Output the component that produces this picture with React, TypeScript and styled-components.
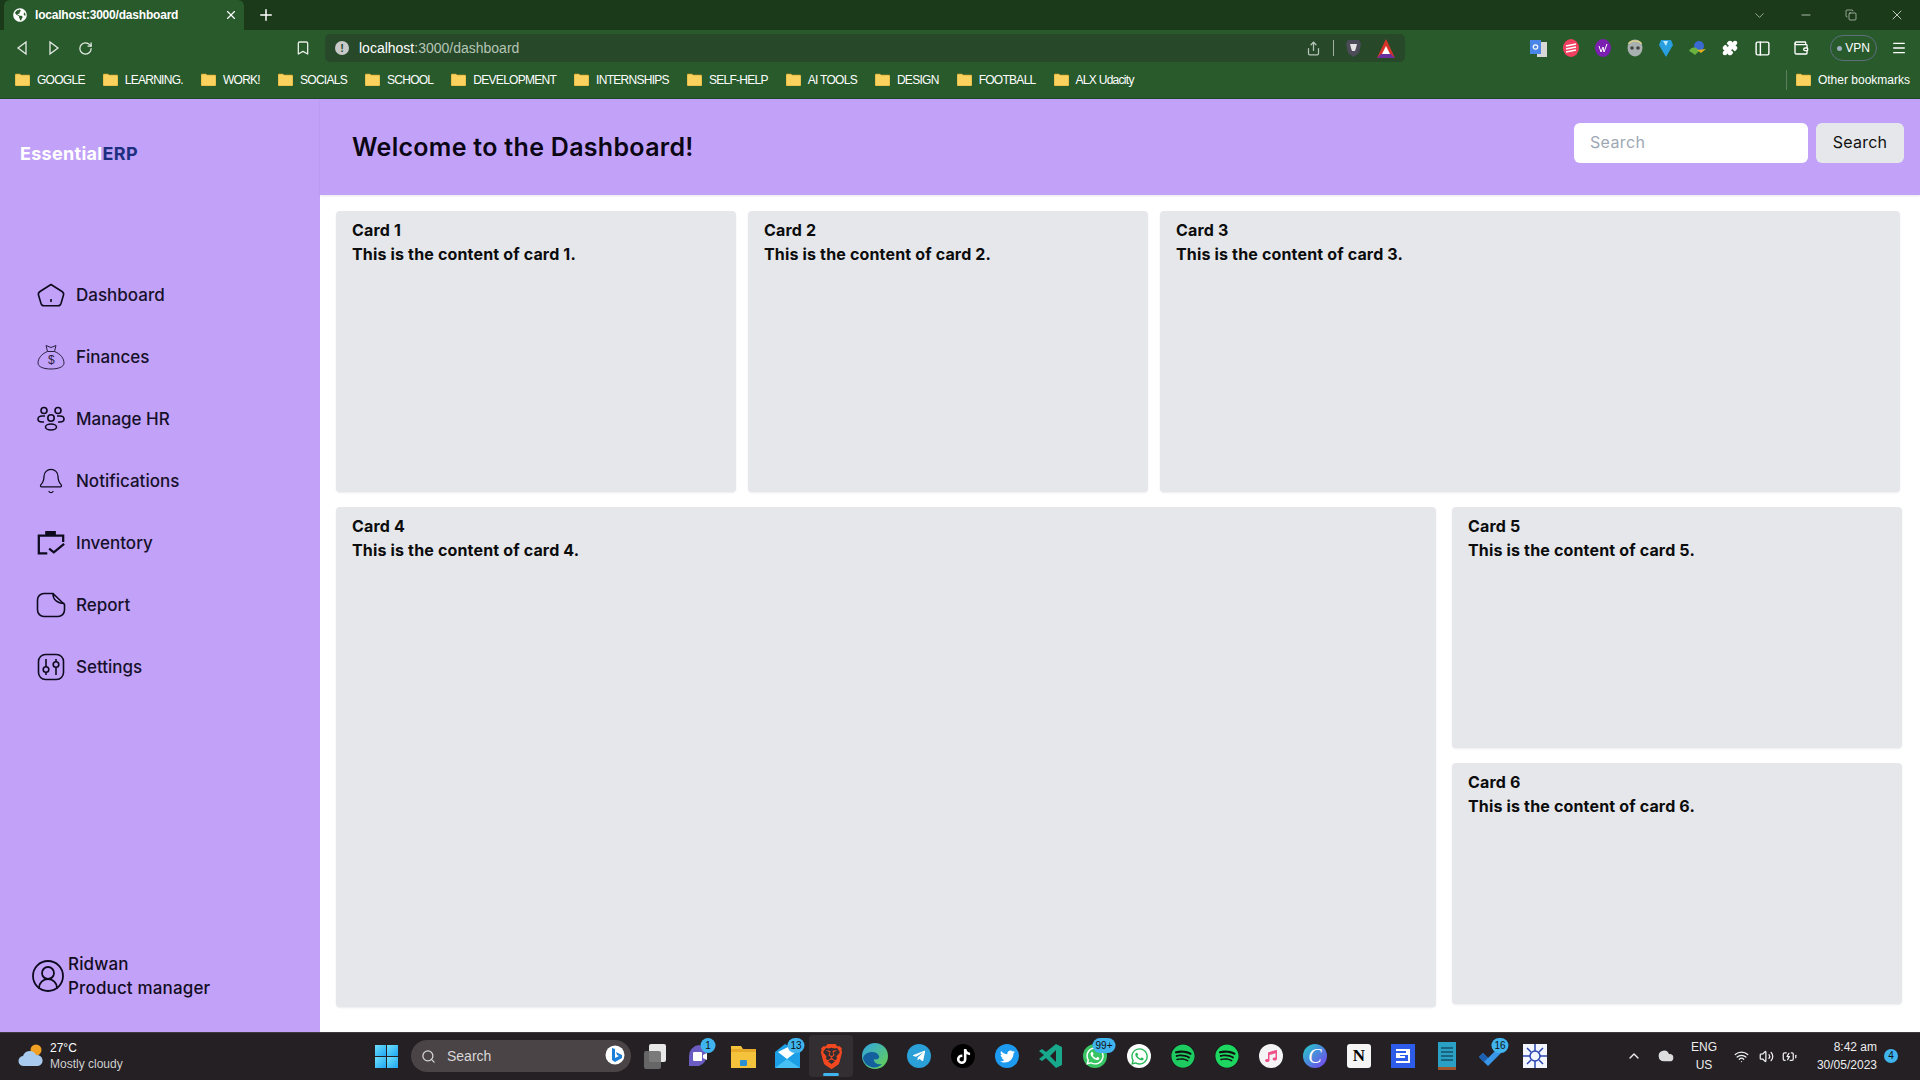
import React from "react";
import styled, { createGlobalStyle } from "styled-components";
import { Bell, UserCircle2, Search as SearchIcon, Bookmark, RotateCw, Plus, X, Minus, Copy, ChevronDown, ChevronUp, Wifi, Volume2, Puzzle, Share, Wallet, PanelLeft, Menu, Cloud, BatteryCharging } from "lucide-react";
import { FaTelegramPlane, FaTiktok, FaTwitter, FaWhatsapp, FaSpotify, FaMusic, FaGlobeAmericas } from "react-icons/fa";
import { SiBrave } from "react-icons/si";

const Global = createGlobalStyle`
  html, body { margin: 0; padding: 0; width: 1920px; height: 1080px; overflow: hidden; }
  body { font-family: "Inter", "Liberation Sans", sans-serif; background: #fff; }
  * { box-sizing: border-box; }
`;
const Page = styled.div`display:flex;flex-direction:column;width:1920px;height:1080px;`;
const TabStrip = styled.div`height:30px;background:#1a3a1a;display:flex;align-items:flex-end;padding-left:4px;flex:none;`;
const Tab = styled.div`width:240px;height:30px;background:#285a2c;border-radius:6px 6px 0 0;display:flex;align-items:center;padding:0 6px 0 9px;gap:8px;color:#fff;font:700 12px "Liberation Sans",sans-serif;`;
const TabTitle = styled.span`flex:1;letter-spacing:-.2px;`;
const NewTab = styled.div`width:40px;height:30px;padding-left:4px;display:flex;align-items:center;justify-content:center;color:#fff;`;
const WindowBtns = styled.div`margin-left:auto;display:flex;align-items:center;height:30px;color:#e8eee8;padding-right:15px;gap:32px;`;
const Toolbar = styled.div`height:36px;background:#285a2c;display:flex;align-items:center;flex:none;color:#fff;padding-left:14px;`;
const NavBtn = styled.div`width:32px;display:flex;align-items:center;color:#e5ece5;`;
const BookmarkBtn = styled.div`margin-left:185px;width:22px;display:flex;color:#e5ece5;`;
const Omnibox = styled.div`margin-left:8px;width:1080px;height:28px;background:#27492a;border-radius:5px;display:flex;align-items:center;padding:0 10px;color:#fff;gap:10px;font:400 14px "Liberation Sans",sans-serif;`;
const InfoDot = styled.span`width:14px;height:14px;border-radius:50%;background:#c9c9c9;color:#27492a;font:700 11px/14px "Liberation Sans",sans-serif;text-align:center;`;
const Dim = styled.span`color:#b5c4b5;`;
const OmniRight = styled.div`margin-left:auto;display:flex;align-items:center;gap:12px;padding-right:0;color:#b5c4b5;`;
const Divider = styled.div`width:1px;height:16px;background:#9fb09f;`;
const Extensions = styled.div`margin-left:125px;display:flex;align-items:center;gap:16px;`;
const ExtGap = styled.span<{ $m: number }>`display:flex;margin-left:${p => p.$m}px;`;
const Vpn = styled.div`width:47px;height:26px;margin-left:5px;margin-right:-2px;border:1px solid #5f6f7f;border-radius:13px;font:400 12px "Liberation Sans",sans-serif;display:flex;align-items:center;justify-content:center;gap:3px;`;
const VpnDot = styled.span`width:5px;height:5px;border-radius:50%;background:#9fb0c0;`;
const Bookmarks = styled.div`height:33px;background:#285a2c;border-bottom:1px solid #1f4a24;display:flex;align-items:center;padding:0 0 5px 15px;flex:none;color:#fff;font:400 12px "Liberation Sans",sans-serif;letter-spacing:-.72px;`;
const BookmarkItem = styled.div`display:flex;align-items:center;gap:7px;margin-right:18px;`;
const Other = styled(BookmarkItem)`margin:0 0 0 auto;padding-right:10px;border-left:1px solid #5b7f5d;padding-left:9px;height:20px;letter-spacing:0;`;
const Folder = () => (<svg width="15" height="13" viewBox="0 0 15 13"><path d="M0 2a1 1 0 0 1 1-1h4l1 1h8a1 1 0 0 1 1 1v9a1 1 0 0 1-1 1H1a1 1 0 0 1-1-1z" fill="#fbd25e" stroke="#c69a2a" strokeWidth=".6"/></svg>);

const Body = styled.div`display:flex;flex:1;min-height:0;`;
const Sidebar = styled.aside`width:320px;flex:none;background:#c2a2f9;display:flex;flex-direction:column;`;
const Logo = styled.div`padding:43px 0 0 20px;font-weight:700;font-size:18px;line-height:24px;color:#fff;letter-spacing:.3px;`;
const LogoAccent = styled.span`color:#1e2f80;`;
const Nav = styled.nav`margin-top:113px;display:flex;flex-direction:column;padding-left:36px;gap:30px;`;
const NavItem = styled.div`display:flex;align-items:center;gap:10px;height:32px;font-size:17px;font-weight:500;color:#16102a;`;
const IconBox = styled.span`width:30px;height:30px;display:flex;align-items:center;justify-content:center;flex:none;`;
const Profile = styled.div`margin-top:auto;margin-bottom:32px;padding-left:30px;display:flex;align-items:center;gap:2px;font-size:17px;line-height:24px;font-weight:500;letter-spacing:.15px;color:#120c22;`;
const Main = styled.main`flex:1;display:flex;flex-direction:column;min-width:0;`;
const Header = styled.header`height:96px;background:#c2a2f9;display:flex;align-items:center;padding:0 16px 0 32px;box-shadow:0 1px 2px rgba(0,0,0,.1);`;
const Title = styled.h1`margin:0 auto 0 0;font-size:25px;font-weight:600;letter-spacing:.3px;color:#0b0614;`;
const SearchInput = styled.div`width:234px;height:40px;background:#fff;border-radius:6px;padding:0 16px 2px;display:flex;align-items:center;font-size:16px;letter-spacing:.35px;color:#a0a7b4;margin-bottom:8px;`;
const SearchBtn = styled.div`width:88px;height:40px;margin:0 0 8px 8px;background:#e5e7eb;border-radius:6px;padding-bottom:2px;display:flex;align-items:center;justify-content:center;font-size:16px;letter-spacing:.2px;color:#111;`;
const Grid = styled.div`display:flex;flex-direction:column;gap:15px;padding:16px 16px 0;`;
const Row = styled.div`display:flex;gap:12px;`;
const Card = styled.div<{ $w: number; $h: number }>`width:${p => p.$w}px;height:${p => p.$h}px;background:#e5e7eb;border-radius:4px;padding:7px 16px;font-weight:700;font-size:16px;line-height:24px;letter-spacing:.16px;color:#0c0c0c;box-shadow:0 1px 2px rgba(0,0,0,.08);`;
const Bottom = styled.div`display:flex;gap:16px;align-items:flex-start;`;
const Stack = styled.div`display:flex;flex-direction:column;gap:15px;`;

const Taskbar = styled.footer`height:48px;flex:none;background:#242024;border-top:1px solid #3b3a3c;padding-bottom:1px;display:flex;align-items:center;color:#fff;font-family:"Liberation Sans",sans-serif;`;
const Weather = styled.div`display:flex;align-items:center;gap:6px;padding:0 0 1px 18px;width:375px;font-size:12px;line-height:16px;`;
const WeatherDim = styled.div`color:#cfcfcf;`;
const Win = styled.div`display:grid;grid-template-columns:11px 11px;gap:1px;width:23px;`;
const WinCell = styled.div`height:11px;background:linear-gradient(135deg,#6fe0fb,#1ea6f2);`;
const TaskSearch = styled.div`margin-left:13px;width:220px;height:32px;background:#4a4446;border-radius:16px;display:flex;align-items:center;padding:0 6px 0 10px;gap:11px;font-size:14px;color:#d8d8d8;`;
const BingWrap = styled.span`margin-left:auto;display:flex;`;
const Apps = styled.div`display:flex;align-items:center;margin-left:2px;`;
const Slot = styled.div<{ $active?: boolean }>`width:44px;height:42px;display:flex;align-items:center;justify-content:center;position:relative;border-radius:4px;background:${p => p.$active ? "#322e32" : "transparent"};`;
const Indicator = styled.span`position:absolute;bottom:1px;left:14px;width:16px;height:3px;border-radius:2px;background:#40b4ee;`;
const Disc = styled.div<{ $c: string; $r?: string }>`width:24px;height:24px;background:${p => p.$c};border-radius:${p => p.$r || "50%"};display:flex;align-items:center;justify-content:center;flex:none;`;
const NotionN = styled.span`color:#000;font:700 17px/24px "Liberation Serif",serif;`;
const CanvaC = styled.span`color:#fff;font:italic 400 20px/24px "Liberation Serif",serif;`;
const Badge = styled.span`position:absolute;top:3px;left:31px;transform:translateX(-50%);min-width:15px;height:15px;padding:0 3px;border-radius:8px;background:#40b4ee;color:#111;font-size:10px;line-height:15px;text-align:center;white-space:nowrap;`;
const Tray = styled.div`margin-left:auto;display:flex;align-items:center;padding-right:22px;font-size:12px;`;
const TraySlot = styled.span<{ $w: number }>`width:${p => p.$w}px;display:flex;justify-content:center;color:#f0f0f0;`;
const TrayText = styled.div<{ $w: number; $a?: string }>`width:${p => p.$w}px;line-height:18px;text-align:${p => p.$a || "center"};color:#eee;`;
const Notif = styled.span`margin-left:7px;width:14px;height:14px;border-radius:50%;background:#40b4ee;color:#111;font-size:10px;text-align:center;line-height:14px;`;

const sw = 1.6;
const ink = "#0e0a1e";
const Money = () => (<svg width="30" height="26" viewBox="0 0 30 26" fill="none" stroke="#2a2040" strokeWidth="1"><path d="M10 1.500l5 2 5-2-1.500 6C25 10 28 15 28 19c0 4-6 6-13 6S2 23 2 19c0-4 3-9 9.500-11.500z"/><path d="M11.500 7.500h7"/><text x="12" y="20" fontSize="12" fontFamily="Liberation Sans" fill="#2a2040" stroke="none">$</text></svg>);
const People = () => (<svg width="30" height="26" viewBox="0 0 30 26" fill="none" stroke={ink} strokeWidth={sw}><circle cx="8" cy="4.500" r="3"/><circle cx="22" cy="4.500" r="3"/><circle cx="15" cy="12" r="3.200"/><ellipse cx="15" cy="21" rx="5.500" ry="3"/><path d="M9 10H6c-2.500 0-4 1.300-4 3s1.500 3 4 3h2M21 10h3c2.500 0 4 1.300 4 3s-1.500 3-4 3h-2"/></svg>);
const Clip = () => (<svg width="32" height="28" viewBox="0 0 32 28" fill="none" stroke={ink} strokeWidth="2.400"><path d="M12 25H3V6h26v7"/><path d="M11 6V2.500h9V6" fill={ink}/><path d="M14 20l5 4 11-9"/></svg>);
const Note = () => (<svg width="30" height="26" viewBox="0 0 30 26" fill="none" stroke={ink} strokeWidth={sw}><path d="M8 1.500h9l11.500 11V18a6.500 6.500 0 0 1-6.500 6.500H8A6.500 6.500 0 0 1 1.500 18V8A6.500 6.500 0 0 1 8 1.500z"/><path d="M17 1.500c0 6 4 10 11.500 10"/></svg>);
const Pentagon = () => (<svg width="30" height="24" viewBox="0 0 30 24" fill="none" stroke={ink} strokeWidth={sw}><path d="M15 1.500l11 7c1.500 1 2 2 1.500 3.500L25 20.500c-.5 1.500-1.500 2.300-3 2.300H8c-1.500 0-2.500-.8-3-2.300L2.500 12c-.5-1.500 0-2.500 1.500-3.500z" strokeLinejoin="round"/><path d="M15 16v3"/></svg>);
const Sliders = () => (<svg width="28" height="28" viewBox="0 0 28 28" fill="none" stroke={ink} strokeWidth={sw}><rect x="1.500" y="1.500" width="25" height="25" rx="7"/><path d="M9 6v8M9 19v3M19 6v3M19 14v8"/><circle cx="9" cy="16.500" r="2.800"/><circle cx="19" cy="11.500" r="2.800"/></svg>);

const Translate = () => (<svg width="17" height="17" viewBox="0 0 17 17"><rect x="7" y="2" width="10" height="15" fill="#d8d8d8"/><rect width="11" height="14" fill="#4a86e8"/><circle cx="5.500" cy="7" r="2.200" fill="none" stroke="#fff" strokeWidth="1.200"/></svg>);
const Stripes = () => (<svg width="16" height="18" viewBox="0 0 16 18"><ellipse cx="8" cy="9" rx="8" ry="9" fill="#f0405f"/><path d="M3 7l10-2M3 10l10-2M3 13l10-2" stroke="#fff" strokeWidth="1.400"/></svg>);
const Purple = () => (<svg width="16" height="18" viewBox="0 0 16 18"><ellipse cx="8" cy="9" rx="8" ry="9" fill="#7b1fb0"/><path d="M4 7l2 6 2-5 1 5 3-8" fill="none" stroke="#fff" strokeWidth="1"/></svg>);
const Skull = () => (<svg width="16" height="18" viewBox="0 0 16 18"><ellipse cx="8" cy="9" rx="7.500" ry="8.500" fill="#a8b0b0"/><path d="M1.500 5C3 1 13 1 14.500 5" fill="none" stroke="#d8cf8a" strokeWidth="1.500"/><circle cx="5" cy="9" r="1.800" fill="#444"/><circle cx="11" cy="9" r="1.800" fill="#444"/></svg>);
const Diamond = () => (<svg width="14" height="18" viewBox="0 0 14 18"><path d="M2 1h10l2 5-7 12L0 6z" fill="#2a9fe0"/><path d="M4 2h5L7 7z" fill="#bfeaff"/></svg>);
const Idm = () => (<svg width="17" height="17" viewBox="0 0 17 17"><circle cx="10" cy="6" r="5" fill="#3a6ad0"/><path d="M0 11c3-5 8-4 10 0l-4 4c-2-2-4-3-6-4z" fill="#6bb33f"/><path d="M8 10l9-1-5 4z" fill="#e0b020"/></svg>);
const BraveGrey = () => (<svg width="15" height="18" viewBox="0 0 15 18"><path d="M2 1h11l2 4-2 9-5.500 4L2 14 0 5z" fill="#4c4c58"/><path d="M4 5h7l-1 4-1 3H6L5 9z" fill="#e4e4e4"/></svg>);
const BatTriangle = () => (<svg width="18" height="19" viewBox="0 0 18 19"><path d="M9 0l9 19H0z" fill="#d8352a"/><path d="M0 19l4-4h10l4 4z" fill="#6a2f9e"/><path d="M9 7l4 8H5z" fill="#fff"/></svg>);

const CloudSun = () => (<svg width="26" height="24" viewBox="0 0 26 24"><circle cx="18" cy="6" r="5.500" fill="#f2a024"/><path d="M6 22a5 5 0 0 1-1-10 7 7 0 0 1 13-1 5.500 5.500 0 0 1 2 11z" fill="#a9cbef"/></svg>);
const Bing = () => (<svg width="20" height="22" viewBox="0 0 20 22"><circle cx="10" cy="10" r="9.500" fill="#fff"/><path d="M7 3l3 1v9l4-2-2-1-1-3 6 3v3l-7 4-3-2z" fill="#1a7fd8"/></svg>);
const TaskView = () => (<svg width="24" height="26" viewBox="0 0 24 26"><rect x="6" y="1" width="17" height="18" rx="2" fill="#e8e8e8"/><rect x="1" y="8" width="17" height="18" rx="2" fill="#6e6e6e" opacity=".9"/></svg>);
const Teams = () => (<svg width="24" height="26" viewBox="0 0 24 26"><path d="M12 2a11 11 0 0 1 0 21H2v-10A11 11 0 0 1 12 2z" fill="#6a5cc0"/><rect x="6" y="9" width="9" height="9" rx="1" fill="#fff"/><path d="M16 12l4-2v7l-4-2z" fill="#fff"/></svg>);
const Explorer = () => (<svg width="25" height="25" viewBox="0 0 25 25"><path d="M0 2h10l2 3h13v19H0z" fill="#f5c33b"/><rect y="5" width="25" height="3" fill="#e6a92a"/><rect x="9" y="16" width="7" height="6" rx="1" fill="#2b8fd6"/></svg>);
const Mail = () => (<svg width="25" height="24" viewBox="0 0 25 24"><path d="M0 8L10 0l15 8v16H0z" fill="#1c9fe6"/><path d="M3 8l12-6 6 6-9 7z" fill="#fff"/><path d="M0 24l12-9 13 9z" fill="#46c0f5"/></svg>);
const Edge = () => (<svg width="26" height="26" viewBox="0 0 26 26"><defs><linearGradient id="edg" x1="0" y1="0" x2="1" y2="1"><stop offset="0" stopColor="#2fa4e8"/><stop offset="1" stopColor="#67d24b"/></linearGradient></defs><circle cx="13" cy="13" r="13" fill="url(#edg)"/><path d="M1 15c2-7 14-8 16-2 1 3-3 4-5 3-1 3 3 6 8 5-5 6-17 4-19-6z" fill="#145f9e"/></svg>);
const VsCode = () => (<svg width="24" height="26" viewBox="0 0 24 26"><path d="M17 1l6 3v18l-6 3-10-10-4 3-3-2 5-4-5-4 3-2 4 3z" fill="#18a88c"/><path d="M17 7v12l-6-6z" fill="#242024"/></svg>);
const SliderS = () => (<svg width="24" height="24" viewBox="0 0 24 24"><rect width="24" height="24" fill="#2c5ce8"/><path d="M5 5h14v6H9v1h5v2H5V9h10V7H5zM19 10v9H5v-2h12v-7z" fill="#fff"/></svg>);
const Notepad = () => (<svg width="18" height="30" viewBox="0 0 18 30"><rect y="1" width="18" height="27" fill="#2aa0c4"/><rect y="26" width="18" height="3" fill="#a0562a"/><path d="M3 7h12M3 11h12M3 15h12M3 19h12" stroke="#14506a" strokeWidth="1.500"/></svg>);
const Todo = () => (<svg width="26" height="22" viewBox="0 0 26 22"><path d="M1 12l4-4 5 5L21 2l4 4-15 15z" fill="#3a96e8"/><path d="M1 12l4-4 5 5-4 4z" fill="#1d5fb0"/></svg>);
const Snow = () => (<svg width="24" height="24" viewBox="0 0 24 24"><rect width="24" height="24" fill="#f4f6ff"/><g stroke="#2a45b0" strokeWidth="1.500" fill="none"><circle cx="12" cy="12" r="5"/><path d="M12 0v7M12 17v7M0 12h7M17 12h7M4 4l4 4M20 4l-4 4M4 20l4-4M20 20l-4-4"/></g></svg>);

const nav = [
  ["Dashboard", <Pentagon />], ["Finances", <Money />], ["Manage HR", <People />],
  ["Notifications", <Bell size={28} strokeWidth={1.100} color={ink} />], ["Inventory", <Clip />], ["Report", <Note />],
  ["Settings", <Sliders />],
] as const;
const marks = ["GOOGLE", "LEARNING.", "WORK!", "SOCIALS", "SCHOOL", "DEVELOPMENT", "INTERNSHIPS", "SELF-HELP", "AI TOOLS", "DESIGN", "FOOTBALL", "ALX Udacity"];
const apps: { icon: React.ReactNode; badge?: string; active?: boolean }[] = [
  { icon: <TaskView /> },
  { icon: <Teams />, badge: "1" },
  { icon: <Explorer /> },
  { icon: <Mail />, badge: "13" },
  { icon: <SiBrave size={25} color="#f2481f" />, active: true },
  { icon: <Edge /> },
  { icon: <Disc $c="#2a9fd8"><FaTelegramPlane size={14} color="#fff" /></Disc> },
  { icon: <Disc $c="#000"><FaTiktok size={15} color="#fff" /></Disc> },
  { icon: <Disc $c="#1d9bf0"><FaTwitter size={15} color="#fff" /></Disc> },
  { icon: <VsCode /> },
  { icon: <Disc $c="#39c463"><FaWhatsapp size={20} color="#fff" /></Disc>, badge: "99+" },
  { icon: <Disc $c="#fff"><FaWhatsapp size={19} color="#28b858" /></Disc> },
  { icon: <Disc $c="#111"><FaSpotify size={24} color="#1ecb60" /></Disc> },
  { icon: <Disc $c="#111"><FaSpotify size={24} color="#1ed760" /></Disc> },
  { icon: <Disc $c="#f4f4f4"><FaMusic size={12} color="#f0508a" /></Disc> },
  { icon: <Disc $c="linear-gradient(135deg,#1fd0c8,#7a3cf0)"><CanvaC>C</CanvaC></Disc> },
  { icon: <Disc $c="#f5f5f5" $r="3px"><NotionN>N</NotionN></Disc> },
  { icon: <SliderS /> },
  { icon: <Notepad /> },
  { icon: <Todo />, badge: "16" },
  { icon: <Snow /> },
];
const Content = ({ n }: { n: number }) => <>Card {n}<br />This is the content of card {n}.</>;

export default function App() {
  return (
    <Page>
      <Global />
      <TabStrip>
        <Tab><FaGlobeAmericas size={14} /><TabTitle>localhost:3000/dashboard</TabTitle><X size={14} /></Tab>
        <NewTab><Plus size={18} /></NewTab>
        <WindowBtns><ChevronDown size={15} strokeWidth={1} /><Minus size={14} strokeWidth={1.200} /><Copy size={12} strokeWidth={1.200} /><X size={16} strokeWidth={1.200} /></WindowBtns>
      </TabStrip>
      <Toolbar>
        <NavBtn><svg width="16" height="16" viewBox="0 0 16 16" fill="none" stroke="currentColor" strokeWidth="1.300"><path d="M12 2L4 8l8 6z" /></svg></NavBtn>
        <NavBtn><svg width="16" height="16" viewBox="0 0 16 16" fill="none" stroke="currentColor" strokeWidth="1.300"><path d="M4 2l8 6-8 6z" /></svg></NavBtn>
        <NavBtn><RotateCw size={15} /></NavBtn>
        <BookmarkBtn><Bookmark size={16} /></BookmarkBtn>
        <Omnibox>
          <InfoDot>!</InfoDot>
          <span>localhost<Dim>:3000/dashboard</Dim></span>
          <OmniRight><Share size={15} /><Divider /><BraveGrey /><ExtGap $m={4}><BatTriangle /></ExtGap></OmniRight>
        </Omnibox>
        <Extensions>
          <Translate /><Stripes /><Purple /><Skull /><Diamond /><Idm />
          <Puzzle size={16} fill="#fff" /><PanelLeft size={17} /><ExtGap $m={6}><Wallet size={16} /></ExtGap><Vpn><VpnDot />VPN</Vpn><Menu size={16} />
        </Extensions>
      </Toolbar>
      <Bookmarks>
        {marks.map(m => <BookmarkItem key={m}><Folder />{m}</BookmarkItem>)}
        <Other><Folder />Other bookmarks</Other>
      </Bookmarks>
      <Body>
        <Sidebar>
          <Logo>Essential<LogoAccent>ERP</LogoAccent></Logo>
          <Nav>{nav.map(([t, i]) => <NavItem key={t}><IconBox>{i}</IconBox>{t}</NavItem>)}</Nav>
          <Profile>
            <UserCircle2 size={36} strokeWidth={1.200} color={ink} />
            <div>Ridwan<br />Product manager</div>
          </Profile>
        </Sidebar>
        <Main>
          <Header>
            <Title>Welcome to the Dashboard!</Title>
            <SearchInput>Search</SearchInput>
            <SearchBtn>Search</SearchBtn>
          </Header>
          <Grid>
            <Row>
              <Card $w={400} $h={281}><Content n={1} /></Card>
              <Card $w={400} $h={281}><Content n={2} /></Card>
              <Card $w={740} $h={281}><Content n={3} /></Card>
            </Row>
            <Bottom>
              <Card $w={1100} $h={500}><Content n={4} /></Card>
              <Stack>
                <Card $w={450} $h={241}><Content n={5} /></Card>
                <Card $w={450} $h={241}><Content n={6} /></Card>
              </Stack>
            </Bottom>
          </Grid>
        </Main>
      </Body>
      <Taskbar>
        <Weather>
          <CloudSun />
          <div>27°C<WeatherDim>Mostly cloudy</WeatherDim></div>
        </Weather>
        <Win><WinCell /><WinCell /><WinCell /><WinCell /></Win>
        <TaskSearch><SearchIcon size={15} />Search<BingWrap><Bing /></BingWrap></TaskSearch>
        <Apps>
          {apps.map((a, i) => (
            <Slot key={i} $active={a.active}>
              {a.icon}
              {a.badge && <Badge>{a.badge}</Badge>}
              {a.active && <Indicator />}
            </Slot>
          ))}
        </Apps>
        <Tray>
          <TraySlot $w={32}><ChevronUp size={16} /></TraySlot>
          <TraySlot $w={32}><Cloud size={16} fill="#ddd" color="#ddd" /></TraySlot>
          <TrayText $w={44}>ENG<br />US</TrayText>
          <TraySlot $w={30}><Wifi size={15} /></TraySlot>
          <TraySlot $w={20}><Volume2 size={15} /></TraySlot>
          <TraySlot $w={26}><BatteryCharging size={15} /></TraySlot>
          <TrayText $w={75} $a="right">8:42 am<br />30/05/2023</TrayText>
          <Notif>4</Notif>
        </Tray>
      </Taskbar>
    </Page>
  );
}
